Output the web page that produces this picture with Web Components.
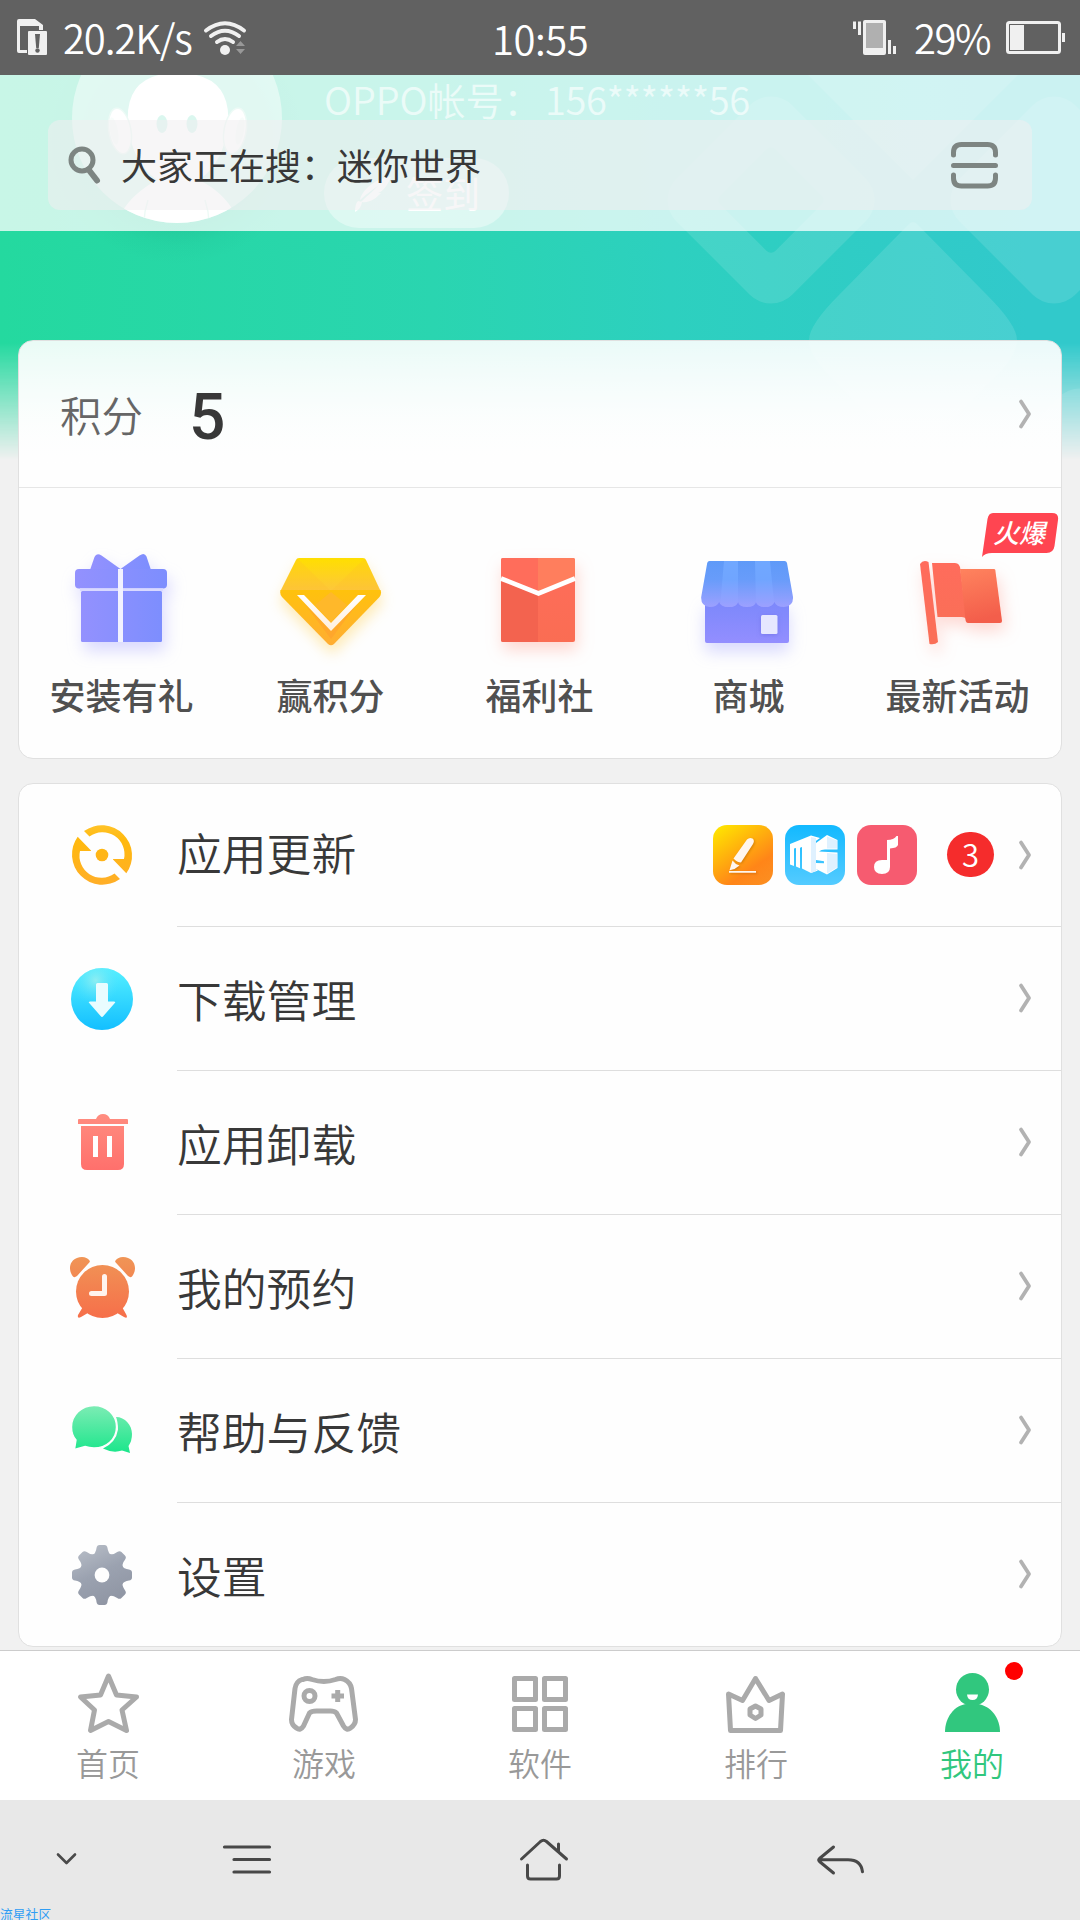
<!DOCTYPE html>
<html lang="zh-CN">
<head>
<meta charset="utf-8">
<title>我的</title>
<style>
html,body{margin:0;padding:0}
body{width:1080px;height:1920px;overflow:hidden;background:#f1f1f1;font-family:"Noto Sans CJK SC",Roboto,sans-serif;color:#383838}
</style>
</head>
<body>
<phone-screen>
  <status-bar speed="20.2K/s" time="10:55" battery="29%"></status-bar>
  <store-page>
    <hero-backdrop slot="back"></hero-backdrop>
    <profile-head slot="back" account="OPPO帐号：" number="156******56" action="签到"></profile-head>
    <points-card label="积分" value="5">
      <feature-item icon="gift">安装有礼</feature-item>
      <feature-item icon="diamond">赢积分</feature-item>
      <feature-item icon="envelope">福利社</feature-item>
      <feature-item icon="shop">商城</feature-item>
      <feature-item icon="flag" hot="火爆">最新活动</feature-item>
    </points-card>
    <menu-card>
      <menu-row icon="update">应用更新<update-apps slot="extra" count="3"></update-apps></menu-row>
      <menu-row icon="download">下载管理</menu-row>
      <menu-row icon="trash">应用卸载</menu-row>
      <menu-row icon="alarm">我的预约</menu-row>
      <menu-row icon="chat">帮助与反馈</menu-row>
      <menu-row icon="gear">设置</menu-row>
    </menu-card>
    <search-head slot="front" text="大家正在搜：迷你世界"></search-head>
  </store-page>
  <tab-bar>
    <tab-item icon="star">首页</tab-item>
    <tab-item icon="pad">游戏</tab-item>
    <tab-item icon="grid">软件</tab-item>
    <tab-item icon="crown">排行</tab-item>
    <tab-item icon="me" active>我的</tab-item>
  </tab-bar>
  <system-nav note="流星社区"></system-nav>
</phone-screen>
<script>
// Each icon is [x, y, width, height of its viewBox, markup]
const ICONS = {
sim:[17,20,31,37,`<path fill="#f0f0f0" fill-rule="evenodd" d="M17 22q0-2 2-2h16l8 6v8h-4v-7H20v24h8v3H19q-2 0-2-2z"/><rect x="27" y="31" width="20" height="25" fill="#616161"/><rect x="28" y="32" width="19" height="24" rx="1" fill="#f0f0f0"/><path fill="#616161" d="M35 35h5l-1.2 14h-2.6z"/><circle cx="37.5" cy="51.500" r="2.200" fill="#616161"/>`],
wifi:[202,18,46,38,`<g fill="none" stroke="#f0f0f0" stroke-width="4" stroke-linecap="round"><path d="M206 29.500q19-14.500 38 0M211 35q14-10.500 28 0M217 41q8-6 16 0"/></g><circle cx="225" cy="49" r="5" fill="#f0f0f0"/><path fill="#989898" d="M240.500 40l4.500 5h-9zM236 48h9l-4.500 5z"/>`],
vibrate:[852,18,46,38,`<path stroke="#f0f0f0" stroke-width="3" d="M854.500 20.500V28M859.500 20.500V34M889.500 39v14M894.500 45v8"/><rect x="863" y="19" width="23" height="35" rx="2" fill="#f0f0f0"/><path fill="#b0b0b0" d="M866 22h17v25h-17z"/>`],
battery:[1005,20,62,36,`<rect x="1007.500" y="22.500" width="52" height="30" rx="2" fill="none" stroke="#f0f0f0" stroke-width="3"/><path fill="#f0f0f0" d="M1010 25h14v25h-14zM1062 33h3v9h-3z"/>`],
search:[66,144,38,42,`<g fill="none" stroke="#7d8582"><circle cx="82" cy="160" r="11" stroke-width="5"/><path d="M88.500 169.500l8.500 11" stroke-width="6" stroke-linecap="round"/></g>`],
scan:[950,140,50,50,`<path fill="none" stroke="#7d8582" stroke-width="5" stroke-linecap="round" d="M953.500 155v-2.500q0-8 8-8h26q8 0 8 8v2.500M953.500 165.500h42M953.500 175v3q0 8 8 8h26q8 0 8-8v-3"/>`],
feather:[352,172,42,42,`<path fill="#fff" fill-opacity=".95" d="M391 177c-14 1-29 12-31 23 4-4 12-10 19-15-6 6-13 12-18 17 10 1 15-4 20-9h-3c5-1 10-9 13-16zM358 201l4 1q-1 7-7 10 0-8 3-11z"/>`],
chevron:[1015,397,20,34,`<path fill="none" stroke="#b2b2b2" stroke-width="3.800" stroke-linecap="round" stroke-linejoin="round" d="M1021 401.500l8 12.500-8 12.500"/>`],
gift:[61,545,120,120,`<defs><linearGradient id="a"><stop stop-color="#9391fe"/><stop offset="1" stop-color="#7d8efe"/></linearGradient></defs><g fill="url(#a)" style="filter:drop-shadow(3px 9px 8px #9391fe55)"><path d="M90 570l4.500-13q2-4.500 7-1.500L120.500 569l19-13.500q5-3.500 7 1l4.500 13.500z"/><rect x="75" y="569" width="92" height="19.500" rx="4"/><rect x="81" y="591" width="81" height="51" rx="1.500"/></g><path fill="#d9d9ff" d="M80 588.300h83v2.700H80z"/><path fill="#f2f2ff" d="M118 569h5v73h-5z"/>`],
diamond:[270,545,120,120,`<defs><linearGradient id="a" x2="0" y2="1"><stop stop-color="#ffdf00"/><stop offset="1" stop-color="#fdc63d"/></linearGradient><linearGradient id="b" x2="0" y2="1"><stop stop-color="#ffc20c"/><stop offset="1" stop-color="#ffad33"/></linearGradient><linearGradient id="c" x2="0" y2="1"><stop stop-color="#fff"/><stop offset="1" stop-color="#ffeedd"/></linearGradient></defs><g style="filter:drop-shadow(1px 8px 7px #ffc62955)"><path fill="url(#a)" d="M299 558h64q2 0 3 2l14.500 31H280.500L296 560q1-2 3-2z"/><path fill="url(#b)" d="M280.500 590h100q1.500 4-1 7l-45.500 47q-3 2.500-6 0l-46-47q-2.500-3-1.500-7z"/></g><path fill="#ffb92b" fill-opacity=".2" d="M297 558l34 33 34-33 15 32H281z"/><path fill="#ffb82a" d="M315 605l16-13 16 13-16 17z"/><path fill="#ff9c2d" fill-opacity=".5" d="M304 603l27 28 27-28-27 36z"/><path fill="url(#c)" d="M297 595h7l27 28 27-28h8l-35 36z"/>`],
envelope:[479,545,120,120,`<defs><linearGradient id="b" x2="0" y2="1"><stop stop-color="#ff6d5b"/><stop offset="1" stop-color="#fa6d53"/></linearGradient></defs><g style="filter:drop-shadow(2px 8px 8px #ff6b5744)"><rect x="501" y="558" width="74" height="84" rx="2" fill="url(#b)"/><path fill="#f3634f" d="M501 579l37 15v48h-35q-2 0-2-2z"/><path fill="#ff6d5b" d="M503 558h35v36l-37-15v-19q0-2 2-2z"/><path fill="#ff7e5d" d="M538 558h35q2 0 2 2v19l-37 15z"/></g><path fill="none" stroke="#fff" stroke-width="4.600" d="M501 578.500l37.500 15 36.500-15"/>`],
shop:[688,545,120,120,`<defs><linearGradient id="a" x2="0" y2="1"><stop stop-color="#7b88fb"/><stop offset="1" stop-color="#938eff"/></linearGradient><linearGradient id="b" gradientUnits="userSpaceOnUse" x1="0" x2="0" y1="561" y2="607"><stop stop-color="#5f9af8"/><stop offset=".4" stop-color="#689cfa"/><stop offset="1" stop-color="#9ca0ff"/></linearGradient><linearGradient id="c" gradientUnits="userSpaceOnUse" x1="0" x2="0" y1="561" y2="607"><stop stop-color="#70a8ff"/><stop offset=".4" stop-color="#70a5ff"/><stop offset="1" stop-color="#9ca0ff"/></linearGradient></defs><g style="filter:drop-shadow(0 9px 8px #8a8cff50)"><path fill="url(#a)" d="M705 600h84v41q0 2-2 2h-80q-2 0-2-2z"/></g><path fill="url(#b)" d="M709.500 561h75q2 0 2.500 2l6 34q.5 9-9 10-8 0-9.500-5-2 5-9.500 5t-9-5q-1 5-9 5t-9-5q-1 5-9.300 5-8.200 0-9.500-5-2 5-9.500 5-9-1-8.500-10l6-34q.5-2 2.300-2z"/><path fill="url(#c)" d="M724 561h14v41q-2 5-9 5t-8.500-5zM755 561h15l4 41q-2 5-9 5t-9-5z"/><rect x="761" y="615" width="16.500" height="19" rx="1.500" fill="#e6e7ff" style="filter:drop-shadow(0 1px 2px #6666dd88)"/>`],
flag:[897,545,120,120,`<defs><linearGradient id="a" x2="0" y2="1"><stop stop-color="#ff6c5c"/><stop offset="1" stop-color="#fa6f57"/></linearGradient><linearGradient id="b" x2=".2" y2="1"><stop stop-color="#ff835e"/><stop offset="1" stop-color="#f35e4b"/></linearGradient></defs><g fill="url(#a)" style="filter:drop-shadow(3px 8px 8px #ff6b5742)"><path d="M920 564q3-4.500 8.500-2l9.500 80q-3 3-8.500 2z"/><path d="M932 563h23q5 0 5.500 7l6 50q-1-3-5-3h-24z"/><path fill="url(#b)" d="M960 569h34q1 0 1.300 1l6.700 51q0 2-2 2h-32q-2 0-2.500-3z"/></g>`],
hot:[980,512,80,46,`<path fill="#ff4551" d="M993 513h59q7 0 6 7l-3.500 26q-1 7-8 7H992q-7 0-10 4l5.500-38q1-6 5.500-6z"/>`],
update:[66,819,72,72,`<defs><linearGradient id="a" gradientUnits="userSpaceOnUse" x1="0" x2="0" y1="825" y2="885"><stop stop-color="#ffc329"/><stop offset=".25" stop-color="#ffb90e"/><stop offset="1" stop-color="#ffae28"/></linearGradient></defs><g fill="url(#a)"><path d="M84 831A30.300 30.300 0 0 1 126.300 873.300l-13.300-13.800v-.5h11A22 22 0 0 0 89.500 836.500z"/><path d="M120 879A30.300 30.300 0 0 1 77.700 836.700l13.300 13.800v.5H80A22 22 0 0 0 114.500 873.500z"/><circle cx="102" cy="855" r="6.300"/></g>`],
download:[66,963,72,72,`<defs><linearGradient id="a" x2="0" y2="1"><stop stop-color="#55f0ff"/><stop offset="1" stop-color="#13bfff"/></linearGradient><radialGradient id="b" cx=".4" cy=".2" r=".4"><stop stop-color="#a0f0ee" stop-opacity=".8"/><stop offset="1" stop-color="#50e0ff" stop-opacity="0"/></radialGradient></defs><circle cx="102" cy="999" r="31" fill="url(#a)"/><circle cx="102" cy="999" r="31" fill="url(#b)"/><path fill="#e9fcff" d="M97.500 983h9q1.500 0 1.500 1.500v17h6q2 0 .8 1.600l-11.400 13q-1.400 1.700-2.800 0l-11.400-13q-1.200-1.600.8-1.600h6v-17q0-1.500 1.500-1.500z"/>`],
trash:[66,1107,72,72,`<defs><linearGradient id="a" gradientUnits="userSpaceOnUse" x1="0" x2="0" y1="1114" y2="1170"><stop stop-color="#ff8d80"/><stop offset="1" stop-color="#ff706c"/></linearGradient></defs><g fill="url(#a)"><path d="M79 1119h17q2-5 7-5t7 5h17q1 0 1 1v4H78v-4q0-1 1-1z"/><path d="M81 1126h43v38q0 6-6 6H87q-6 0-6-6z"/></g><path fill="#fff" d="M93 1136h5v21h-5zM107 1136h5v21h-5z"/>`],
alarm:[66,1250,72,72,`<defs><linearGradient id="a" gradientUnits="userSpaceOnUse" x1="0" x2="0" y1="1256" y2="1317"><stop stop-color="#f09556"/><stop offset="1" stop-color="#f66f4a"/></linearGradient></defs><g fill="url(#a)"><circle cx="102.500" cy="1290.500" r="26.500"/><path d="M73 1275.500C66.500 1267 71 1256 82 1256q5 0 7.500 3.500.8 1-.2 2L77 1275q-2.500 2-4 .5zM132 1275.500c6.500-8.500 2-19.500-9-19.500q-5 0-7.500 3.500-.8 1 .2 2L128 1275q2.500 2 4 .5zM84 1304l-6 10q-1 4 3 2l12-7zM121 1304l5.500 10q1.500 4-2.500 2l-12-7z"/></g><path fill="none" stroke="#fff4ef" stroke-width="5" stroke-linecap="round" stroke-linejoin="round" d="M104.500 1275.500v17h-13"/>`],
chat:[66,1395,72,72,`<defs><linearGradient id="a" gradientUnits="userSpaceOnUse" x1="0" x2="0" y1="1406" y2="1453"><stop stop-color="#7cecb4"/><stop offset="1" stop-color="#1be68b"/></linearGradient></defs><path fill="url(#a)" d="M116 1417c9 0 16 8 16 17q0 7-3.500 12l1.500 7-8-2.500q-9 3-19-2 13-6 15-19 0-8-2-12.500z"/><path fill="url(#a)" stroke="#fefefe" stroke-width="1.400" d="M94 1405.500c12 0 22.500 9 22.500 21.500s-10.500 21-22.500 21q-5 0-9-1.500l-10.500 3 1.500-9.500q-4.500-5-4.500-13c0-12 10-21.500 22.500-21.500z"/>`],
gear:[66,1539,72,72,`<defs><linearGradient id="a" gradientUnits="userSpaceOnUse" x1="85" x2="110" y1="1548" y2="1605"><stop stop-color="#b4bac4"/><stop offset=".45" stop-color="#9ba2b0"/><stop offset="1" stop-color="#8f95a3"/></linearGradient><mask id="m"><g fill="#fff"><circle cx="102" cy="1575" r="22.500"/>${[0,45,90,135,180,225,270,315].map(r=>`<path transform="rotate(${r} 102 1575)" d="M92 1556q4-3 4.500-8 .5-3 3-3h5q2.500 0 3 3 .5 5 4.500 8z"/>`).join('')}</g><circle cx="102" cy="1575" r="7.400"/></mask></defs><path mask="url(#m)" fill="url(#a)" d="M70 1543h64v64H70z"/>`],
pen:[0,0,60,60,`<defs><linearGradient id="pg" x1=".1" x2=".8" y2="1"><stop stop-color="#ffe600"/><stop offset=".75" stop-color="#ff8518"/><stop offset="1" stop-color="#fc8d20"/></linearGradient></defs><rect width="60" height="60" rx="14" fill="url(#pg)"/><g fill="#fff6ee" style="filter:drop-shadow(1px 1px 1px #a9590077)"><path d="M34 14.500q2.500-2.500 5.500-1 2.500 2 .5 5.500L28 37.500q-4 0-7.500-4zM19.500 35.500q3 4 7 5l-5 3.500-5 1.200zM16 46h27v1.800H16z"/></g>`],
cube:[0,0,60,60,`<defs><linearGradient id="cg" x2="0" y2="1"><stop stop-color="#12b9ff"/><stop offset="1" stop-color="#54cbff"/></linearGradient></defs><rect width="60" height="60" rx="14" fill="url(#cg)"/><path fill="#fff" d="M5 19l21-8.500 9 2.500-5.500 4v26l3.500 2.500-7 2.500-9-4.500V22l-2 .7v20.500l-4-1.700V23l-2 .6V41l-4-1.500zM31 18l11-8 10.500 5v9.500H40q-4 0-6 2l18.500 1V43L42 49.500 31 44v-6l8 .2v-2l-8-1.200z"/><path fill="#dff1ff" d="M26 12l5 1v33l-5 2zM42 11.500l10 4v8H42zM42 28l10 1v13.500l-10 6z"/>`],
music:[0,0,60,60,`<rect width="60" height="60" rx="14" fill="#f65b70"/><path fill="#fff" d="M30 15q7 0 9.500-4H41v9q-1 3-8 3.500V42q0 7-8 7-8-.500-8-7 0-7 8-7h5z"/>`],
star:[72,1668,72,70,`<path fill="none" stroke="#aaa" stroke-width="5" stroke-linejoin="round" d="M108.500 1676l8 19 20 2-14.500 13 4.500 20.500-18-9-18 9 4-20.500L80.500 1697l20-2z"/>`],
pad:[288,1668,72,70,`<g fill="none" stroke="#aaa" stroke-width="5" stroke-linejoin="round"><path d="M303 1679.500q4-2 9 0 12 4 23.500 0 5-2 9 0 6 3 7 9l4 31q0 5-5 8.500-4 3-7-2l-7-13q-2-2-6-2h-14q-5 0-7 2l-6 13q-3 5-7 2-5-3-5-8.500l3.500-31q1-7 7-9z"/><circle cx="309.500" cy="1696" r="5.500"/><path stroke-linejoin="miter" d="M331.500 1696H344M337.700 1690v12"/></g>`],
grid:[504,1668,72,70,`<g fill="none" stroke="#aaa" stroke-width="5" stroke-linejoin="round"><path d="M514.500 1678.500h21v21h-21zM544.500 1678.500h21v21h-21zM514.500 1708.500h21v21h-21zM544.500 1708.500h21v21h-21z"/></g>`],
crown:[720,1668,72,70,`<g fill="none" stroke="#aaa" stroke-width="5" stroke-linejoin="round"><path d="M728.500 1694l14 6.500 13-22 13.500 22 13.500-6.500-2 36.500h-50z"/><path d="M755.500 1706l5.500 3v6l-5.500 3.500-5.500-3.500v-6z"/></g>`],
me:[936,1668,72,70,`<g fill="#31c77e"><circle cx="972.500" cy="1689.500" r="16.500"/><path d="M945 1732c0-14 9-27 22-28h11c13 2 22 14 22 28z"/></g><path fill="#fff" d="M967 1694.500h11q-.5 5.500-5.500 5.500t-5.500-5.500z"/>`],
hide:[52,1845,30,28,`<path fill="none" stroke="#4a4a4a" stroke-width="2.600" stroke-linecap="round" stroke-linejoin="round" d="M58 1854.500l8.500 8.500 8.500-8.500"/>`],
menu:[221,1835,52,50,`<path stroke="#484848" stroke-width="3.200" stroke-linecap="round" d="M224.500 1847h45M234 1859.500h35.500M234 1872h35.500"/>`],
home:[517,1835,54,50,`<path fill="none" stroke="#484848" stroke-width="3" stroke-linecap="round" stroke-linejoin="round" d="M521.500 1859l19-17.500q3-2.500 6 0l20 17.500M558.500 1844v8M527.500 1865v11q0 3 3 3h26q3 0 3-3v-11"/>`],
back:[815,1835,52,50,`<path fill="none" stroke="#484848" stroke-width="3" stroke-linecap="round" stroke-linejoin="round" d="M833.500 1847l-14 11.500q-1.500 1.500 0 3L833.500 1873M820 1859.800h28q13 0 14.500 12"/>`]
};
const svg = n => { const [x,y,w,h,m] = ICONS[n]; return `<svg class="i-${n}" width="${w}" height="${h}" viewBox="${x} ${y} ${w} ${h}">${m}</svg>`; };
const define = (name, css, html) => customElements.define(name, class extends HTMLElement {
  constructor(){ super(); this.attachShadow({mode:'open'}); }
  connectedCallback(){
    const a = k => this.getAttribute(k) || '';
    this.shadowRoot.innerHTML = `<style>*{box-sizing:border-box}svg{display:block;flex:none;overflow:visible}${css}</style>` + html(a, this);
  }
});

define('phone-screen', `:host{display:flex;flex-direction:column;width:1080px;height:1920px;overflow:hidden}`, () => `<slot></slot>`);

define('status-bar', `:host{display:flex;height:75px;background:#616161;color:#fff;font:350 40px/75px "Noto Sans CJK SC",sans-serif;flex:none}
.side{flex:1;display:flex;align-items:center}.l{padding-left:17px}.r{justify-content:flex-end;padding-right:13px}
span{display:block;white-space:nowrap}.s{margin:0 8px 0 15px;width:131px;letter-spacing:-1.1px}.t{letter-spacing:-.5px;width:98px;padding-top:1px;text-indent:-1px}.p{margin:0 14px 0 16px;width:77px;letter-spacing:-1.4px}`,
a => `<div class="side l">${svg('sim')}<span class="s">${a('speed')}</span>${svg('wifi')}</div><span class="t">${a('time')}</span><div class="side r">${svg('vibrate')}<span class="p">${a('battery')}</span>${svg('battery')}</div>`);

define('store-page', `:host{display:grid;height:1575px;flex:none;overflow:hidden;grid-template:1fr/1080px;background:#f1f1f1}
::slotted([slot]),main{grid-area:1/1;align-self:start}::slotted(profile-head),main{z-index:1}::slotted(search-head){z-index:2}main{padding:265px 18px 0;display:flex;flex-direction:column;gap:24px}`,
() => `<slot name="back"></slot><main><slot></slot></main><slot name="front"></slot>`);

define('hero-backdrop', `:host{display:block;height:390px;background:linear-gradient(90deg,#24d99f,#2ad5b0 40%,#2dd0bf 62%,#31c9cb 95%);-webkit-mask:linear-gradient(#000 268px,transparent 385px);mask:linear-gradient(#000 268px,transparent 385px)}`,
() => { const d=(x,y,e='')=>`<rect x="${x-82}" y="${y-82}" width="164" height="164" rx="30" transform="rotate(45 ${x} ${y})" ${e}/>`;
return `<svg width="1080" height="390" viewBox="0 75 1080 390" style="overflow:hidden"><defs><mask id="m" maskUnits="userSpaceOnUse" x="600" y="0" width="400" height="400"><path fill="#fff" d="M600 0h480v500H600z"/><rect x="732" y="161" width="78" height="78" rx="6" fill="#000"/></mask><radialGradient id="s"><stop offset=".7" stop-color="#128f70" stop-opacity=".16"/><stop offset=".85" stop-color="#128f70" stop-opacity=".05"/><stop offset="1" stop-color="#128f70" stop-opacity="0"/></radialGradient></defs><ellipse cx="177" cy="140" rx="130" ry="124" fill="url(#s)"/><g fill="#fff" fill-opacity=".115">${d(771,200,'mask="url(#m)"')}${d(1054,200)}<path d="M913 180l-110-110h220z"/><path d="M908 225q5-6 10 0l69 70q30 30 30 45 0 15-20 35l-84 84-84-84q-20-20-20-35 0-15 30-45z"/>${d(1080,492)}</g></svg>`; });

define('profile-head', `:host{display:flex;height:156px;color:#fff;overflow:hidden;padding-left:72px}
.info{margin-left:42px;display:flex;flex-direction:column}
.acc{display:flex;height:48px;line-height:48px;align-items:flex-start;font-size:38px;font-weight:350;white-space:nowrap;color:rgba(255,255,255,.64)}.acc span{display:block}.o{width:221px}.n{letter-spacing:-.4px}
.pill{margin-top:35px;width:185px;height:70px;border-radius:35px;background:rgba(255,255,255,.38);display:flex;align-items:center;padding-left:28px;gap:12px;font-size:37px;line-height:50px;font-weight:400}`,
a => `<svg width="210" height="156" viewBox="72 75 210 156"><defs><clipPath id="c"><circle cx="177" cy="118" r="105"/></clipPath></defs><g clip-path="url(#c)"><path fill="#fff" fill-opacity=".46" d="M60 0h240v240H60z"/><path fill="#fff" d="M122 212q10-18 35-32-25-18-29-55-4-52 49-52 55 0 51 52-4 37-29 55 24 12 35 32l-20 20h-75z"/><g fill="#fff" stroke="#b9ebdb" stroke-width="1.500"><ellipse cx="120" cy="131" rx="11" ry="23" transform="rotate(-10 120 131)"/><ellipse cx="235" cy="131" rx="11" ry="23" transform="rotate(10 235 131)"/></g><g fill="#e2f7f0"><ellipse cx="114" cy="131" rx="4" ry="14" transform="rotate(-10 114 131)"/><ellipse cx="240" cy="131" rx="4" ry="14" transform="rotate(10 240 131)"/></g><path fill="none" stroke="#b9ebdb" stroke-width="1.500" d="M148 200q-5 15-4 30M205 200q5 15 4 30"/></g><g fill="#70ddc0"><ellipse cx="162" cy="124" rx="5.500" ry="9"/><ellipse cx="192" cy="124" rx="5.500" ry="9"/></g></svg>
<div class="info"><div class="acc"><span class="o">${a('account')}</span><span class="n">${a('number')}</span></div><div class="pill">${svg('feather')}<span>${a('action')}</span></div></div>`);

define('search-head', `:host{display:block;height:156px;width:1080px;box-sizing:border-box;background:rgba(255,255,255,.75);padding:45px 48px 0}
.box{height:90px;border-radius:12px;background:rgba(241,239,240,.54);display:flex;align-items:center;padding:0 32px 0 18px;color:#383838}
span{flex:1;margin-left:17px;font-size:36px;line-height:50px;padding-bottom:3px}`,
a => `<div class="box">${svg('search')}<span>${a('text')}</span>${svg('scan')}</div>`);

define('points-card', `:host{display:block;height:419px;border:1px solid #e0e0e0;border-radius:15px;background:linear-gradient(rgba(255,255,255,.9),rgba(255,255,255,.94) 60px,#fefefe 130px);box-sizing:border-box}
.top{display:flex;height:147px;align-items:center;border-bottom:1px solid #e6e6e6;padding:0 26px 0 41px}
.l{font-size:41.5px;font-weight:350;color:#666;width:129px;margin-top:-1px}.v{font:500 64px/80px Roboto,sans-serif;color:#383838;flex:1;padding-top:7px}
.f{display:flex;gap:1px;margin-left:-2px}`,
a => `<div class="top"><span class="l">${a('label')}</span><span class="v">${a('value')}</span>${svg('chevron')}</div><div class="f"><slot></slot></div>`);

define('feature-item', `:host{display:flex;flex:none;flex-direction:column;align-items:center;width:208px;padding-top:57px;position:relative}
.t{font-size:36px;line-height:50px;font-weight:500;color:#505050;margin-top:4px;white-space:nowrap;padding-left:1px}
.hot{position:absolute;right:1px;top:24px;width:80px;height:46px}.hot span{position:absolute;left:13px;top:1px;font:italic 500 26px/38px "Noto Sans CJK SC",sans-serif;color:#fff}`,
a => `<div class="icon">${svg(a('icon'))}</div><div class="t"><slot></slot></div>${a('hot')?`<div class="hot">${svg('hot')}<span>${a('hot')}</span></div>`:''}`);

define('menu-card', `:host{display:flex;flex-direction:column;border:1px solid #e0e0e0;border-radius:15px;background:#fefefe;height:864px;box-sizing:border-box}
::slotted(*){height:144px;flex:none}::slotted(:first-child){height:143px;--lift:-6px;--icon:-1px}::slotted(:last-child){--line:transparent}`, () => `<slot></slot>`);

define('menu-row', `:host{display:flex;align-items:center;padding-left:47px;box-sizing:border-box;gap:39px}
:host>svg{margin-top:var(--icon,0)}.b{flex:1;align-self:stretch;border-bottom:1px solid var(--line,#dedede);display:flex;align-items:center;padding-right:26px;padding-left:0}
.b>svg{margin-top:-1px}.t{flex:1;font-size:44.8px;line-height:60px;font-weight:350;color:#383838;margin-top:var(--lift,0)}`,
a => `${svg(a('icon'))}<div class="b"><div class="t"><slot></slot></div><slot name="extra"></slot>${svg('chevron')}</div>`);

define('update-apps', `:host{display:flex;align-items:center;gap:12px;margin-right:21px}
b{margin-left:18px;width:47px;height:45px;border-radius:23px;background:#f52c2c;color:#fff;font:350 31px/44px "Noto Sans CJK SC",sans-serif;text-align:center;margin-top:-1px}`,
a => `${svg('pen')}${svg('cube')}${svg('music')}<b>${a('count')}</b>`);

define('tab-bar', `:host{display:flex;height:150px;background:#fff;border-top:1px solid #ccc;box-sizing:border-box;flex:none}`, () => `<slot></slot>`);

define('tab-item', `:host{flex:1;display:flex;flex-direction:column;align-items:center;padding-top:17px;color:#999;position:relative}
:host([active]){color:#31c77e}.t{font-size:32px;line-height:44px;font-weight:350;margin-top:2px}
i{position:absolute;left:141px;top:11px;width:18px;height:18px;border-radius:9px;background:#f00}`,
(a,e) => `${svg(a('icon'))}<div class="t"><slot></slot></div>${e.hasAttribute('active')?'<i></i>':''}`);

define('system-nav', `:host{display:grid;height:120px;background:#e8e8e8;flex:none;overflow:hidden}
.k{grid-area:1/1;display:flex;align-items:flex-start;padding:35px 0 0 52px}
.i-hide{margin-top:10px}.i-menu{margin-left:139px}.i-home{margin-left:244px}.i-back{margin-left:244px}
.n{grid-area:1/1;align-self:end;font-size:12.800px;line-height:13px;height:13px;color:#2f9df4;white-space:nowrap}`,
a => `<div class="k">${svg('hide')}${svg('menu')}${svg('home')}${svg('back')}</div><div class="n">${a('note')}</div>`);
</script>
</body>
</html>
